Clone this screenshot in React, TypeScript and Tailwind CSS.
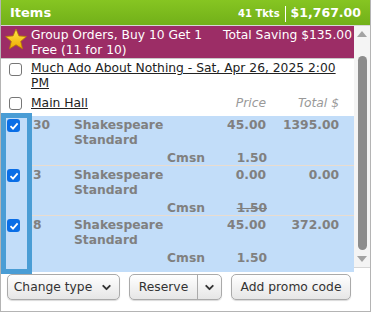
import { ChevronDown } from "lucide-react";

function Box({ checked }: { checked?: boolean }) {
  if (checked) {
    return (
      <div className="w-[13px] h-[13px] rounded-[3px] bg-[#0a6ee6] flex items-center justify-center shrink-0">
        <svg width="10" height="10" viewBox="0 0 10 10">
          <path d="M1.5 5.2 L4 7.6 L8.6 2.4" fill="none" stroke="white" strokeWidth="1.8" />
        </svg>
      </div>
    );
  }
  return <div className="w-[13px] h-[13px] rounded-[3px] border border-[#767676] bg-white shrink-0" />;
}

const rows = [
  { qty: "30", price: "45.00", total: "1395.00", cmsn: "1.50", strike: false },
  { qty: "3", price: "0.00", total: "0.00", cmsn: "1.50", strike: true },
  { qty: "8", price: "45.00", total: "372.00", cmsn: "1.50", strike: false },
];

export default function App() {
  return (
    <div className="w-[371px] h-[312px] flex flex-col bg-white border-l border-r border-b border-[#b4b4b4] text-[12.3px] font-['DejaVu_Sans',Verdana,sans-serif] overflow-hidden">
      {/* header */}
      <div className="h-[25px] shrink-0 bg-gradient-to-b from-[#86c522] to-[#72b019] flex items-center justify-between pl-[9px] pr-[9px] text-white font-bold">
        <span className="text-[13px]">Items</span>
        <div className="flex items-center pt-[2px]">
          <span className="text-[10px]">41 Tkts</span>
          <span className="w-px h-[16px] bg-white mx-[5px]" />
          <span className="text-[12.5px]">$1,767.00</span>
        </div>
      </div>

      <div className="h-[243px] shrink-0 flex border-t border-[#d6d6d6] border-b">
        <div className="flex-1 flex flex-col">
          {/* group banner */}
          <div className="h-[32px] bg-[#9c2d66] text-white flex leading-[15px] pt-[2px]">
            <svg width="24" height="22" viewBox="0 0 24 22" className="ml-[3px] shrink-0">
              <defs>
                <linearGradient id="st" x1="0" y1="0" x2="0" y2="1">
                  <stop offset="0" stopColor="#ffe94a" />
                  <stop offset="1" stopColor="#f0a800" />
                </linearGradient>
              </defs>
              <path d="M12 1 L14.9 7.9 L22.4 8.5 L16.7 13.4 L18.5 20.8 L12 16.8 L5.5 20.8 L7.3 13.4 L1.6 8.5 L9.1 7.9 Z" fill="url(#st)" stroke="#b57d00" strokeWidth="0.8" />
            </svg>
            <div className="ml-[3px] w-[180px]">Group Orders, Buy 10 Get 1 Free (11 for 10)</div>
            <div className="flex-1 text-right pr-[2px]">Total Saving $135.00</div>
          </div>

          {/* performance */}
          <div className="border-t border-[#c8c8c8] flex pt-[2px] leading-[15px] text-[#222]">
            <div className="w-[30px] pl-[8px] pt-[2px] shrink-0">
              <Box />
            </div>
            <span className="underline pr-[8px]">Much Ado About Nothing - Sat, Apr 26, 2025 2:00 PM</span>
          </div>

          <div className="flex items-center leading-[15px] mt-[5px] h-[15px]">
            <div className="w-[30px] pl-[8px] shrink-0">
              <Box />
            </div>
            <span className="underline text-[#222] flex-1">Main Hall</span>
            <span className="w-[73px] text-right italic text-[#999]">Price</span>
            <span className="w-[73px] text-right italic text-[#999]">Total $</span>
            <span className="w-[15px]" />
          </div>

          {/* selected lines */}
          <div className="flex-1 flex mt-[2px]">
            <div className="w-[31px] shrink-0 border-[5px] border-[#4a9dd5] bg-[#c2ddf9] flex flex-col pt-[1px] pl-[1px]">
              {rows.map((r, i) => (
                <div key={i} className="h-[50px]">
                  <Box checked />
                </div>
              ))}
            </div>
            <div className="flex-1 flex flex-col bg-[#c2ddf9] mt-[3px] mb-[2px] text-[#808080] font-bold leading-[15px]">
              {rows.map((r, i) => (
                <div key={i} className={"h-[50px] pt-[2px] " + (i < 2 ? "border-b border-[#e9dccf]" : "")}>
                  <div className="flex">
                    <span className="w-[42px] pl-[1px] shrink-0">{r.qty}</span>
                    <span className="w-[100px]">Shakespeare Standard</span>
                    <span className="flex-1 text-right">{r.price}</span>
                    <span className="w-[73px] text-right">{r.total}</span>
                    <span className="w-[15px]" />
                  </div>
                  <div className="flex mt-[3px]">
                    <span className="w-[173px] text-right">Cmsn</span>
                    <span className={"w-[62px] text-right " + (r.strike ? "line-through" : "")}>{r.cmsn}</span>
                  </div>
                </div>
              ))}
            </div>
          </div>
        </div>

        {/* scrollbar */}
        <div className="w-[16px] shrink-0 bg-[#f4f4f4] flex flex-col items-center py-[5px]">
          <svg width="10" height="6" viewBox="0 0 10 6">
            <path d="M0 6 L5 0 L10 6 Z" fill="#a3a3a3" />
          </svg>
          <div className="w-[9px] flex-1 rounded-full bg-[#8c8c8c] mt-[19px] mb-[6px]" />
          <svg width="10" height="6" viewBox="0 0 10 6">
            <path d="M0 0 L5 6 L10 0 Z" fill="#a3a3a3" />
          </svg>
        </div>
      </div>

      {/* footer */}
      <div className="flex gap-[9px] pl-[6px] pt-[6px] text-[#333]">
        <button className="h-[26px] w-[113px] rounded-[5px] border border-[#aaa] bg-gradient-to-b from-white to-[#e6e6e6] flex items-center justify-center gap-[8px] shadow-[0_1px_1px_rgba(0,0,0,0.15)]">
          Change type
          <ChevronDown size={13} strokeWidth={3.5} />
        </button>
        <button className="h-[26px] w-[93px] rounded-[5px] border border-[#aaa] bg-gradient-to-b from-white to-[#e6e6e6] flex items-center shadow-[0_1px_1px_rgba(0,0,0,0.15)]">
          <span className="flex-1 text-center">Reserve</span>
          <span className="w-[24px] h-full border-l border-[#aaa] flex items-center justify-center">
            <ChevronDown size={13} strokeWidth={3.5} />
          </span>
        </button>
        <button className="h-[26px] w-[120px] rounded-[5px] border border-[#aaa] bg-gradient-to-b from-white to-[#e6e6e6] flex items-center justify-center shadow-[0_1px_1px_rgba(0,0,0,0.15)]">
          Add promo code
        </button>
      </div>
    </div>
  );
}
